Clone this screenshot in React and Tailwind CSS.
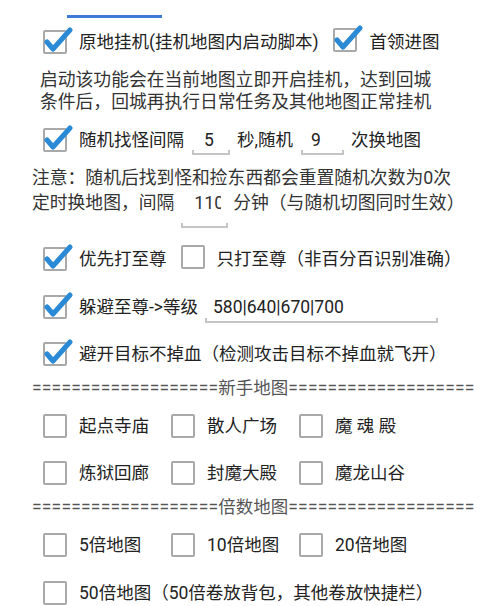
import React from 'react';

const Check = ({ checked }) => (
  <span className="relative inline-block w-[24px] h-[24px] shrink-0 border-2 border-[#a9a9a9] rounded-[2px] bg-white">
    {checked && (
      <svg className="absolute left-[-2px] top-[-6px] w-[30px] h-[28px]" viewBox="0 0 30 28">
        <path d="M4 16 L10 23 L27 4" fill="none" stroke="#2a8ad6" strokeWidth="5" strokeLinecap="round" strokeLinejoin="round" />
      </svg>
    )}
  </span>
);

// android style edit text: text + underline with small ticks
const Field = ({ value, width, pad = 12, drop = 15, clip }) => (
  <span className={`relative inline-flex items-center shrink-0 h-[24px] ${width}`}>
    <span className={`overflow-hidden whitespace-nowrap ${clip || ''}`} style={{ paddingLeft: pad }}>{value}</span>
    <span
      className="absolute left-0 right-0 h-[5px] border-b-2 border-x-2 border-[#c4c4c4]"
      style={{ top: 12 + drop - 5 }}
    />
  </span>
);

const Row = ({ className = '', children }) => (
  <div className={`flex items-center h-[36px] pl-[43px] whitespace-nowrap ${className}`}>{children}</div>
);

const Sep = ({ label, className = '' }) => (
  <div className={`flex items-center h-[20px] pl-[32px] text-[#555] whitespace-nowrap ${className}`}>
    <span className="tracking-[0.2px]">{'='.repeat(19)}</span>
    <span>{label}</span>
    <span className="tracking-[0.2px]">{'='.repeat(19)}</span>
  </div>
);

const Grid3 = ({ items, className = '' }) => (
  <div className={`grid grid-cols-[128px_128px_1fr] items-center h-[36px] pl-[43px] whitespace-nowrap ${className}`}>
    {items.map((t) => (
      <div key={t} className="flex items-center gap-[12px]">
        <Check />
        <span>{t}</span>
      </div>
    ))}
  </div>
);

export default function App() {
  return (
    <div
      className="w-[500px] h-[606px] overflow-hidden bg-white text-[#222] text-[17.5px] leading-[22px]"
      style={{ fontFamily: 'Roboto, "Noto Sans CJK SC", sans-serif' }}
    >
      <div className="ml-[67px] mt-[15px] w-[95px] h-[3px] bg-[#3d7ad8]" />

      <Row className="mt-[6px]">
        <Check checked />
        <span className="ml-[12px]">原地挂机(挂机地图内启动脚本)</span>
        <span className="ml-[14px]"><Check checked /></span>
        <span className="ml-[13px]">首领进图</span>
      </Row>

      <div className="mt-[9px] pl-[40px] text-[#333] text-[17.8px]">
        <div>启动该功能会在当前地图立即开启挂机，达到回城</div>
        <div>条件后，回城再执行日常任务及其他地图正常挂机</div>
      </div>

      <Row className="mt-[9px]">
        <Check checked />
        <span className="ml-[12px]">随机找怪间隔</span>
        <span className="ml-[8px]"><Field value="5" width="w-[38px]" pad={12} drop={15} /></span>
        <span className="ml-[7px]">秒,随机</span>
        <span className="ml-[8px]"><Field value="9" width="w-[43px]" pad={10} drop={15} /></span>
        <span className="ml-[7px]">次换地图</span>
      </Row>

      <div className="mt-[9px] h-[22px] pl-[32px] text-[#333] text-[17.8px] whitespace-nowrap">注意：随机后找到怪和捡东西都会重置随机次数为0次</div>

      <div className="flex items-center h-[28px] pl-[32px] text-[#333] text-[17.8px] whitespace-nowrap">
        <span>定时换地图，间隔</span>
        <span className="ml-[7px]"><Field value="110" width="w-[47px]" pad={13} drop={25} clip="w-[40px]" /></span>
        <span className="ml-[5px]">分钟（与随机切图同时生效）</span>
      </div>

      <Row className="mt-[24px]">
        <Check checked />
        <span className="ml-[12px]">优先打至尊</span>
        <span className="ml-[14px]"><Check /></span>
        <span className="ml-[12px]">只打至尊（非百分百识别准确）</span>
      </Row>

      <Row className="mt-[12px]">
        <Check checked />
        <span className="ml-[12px]">躲避至尊-&gt;等级</span>
        <span className="ml-[7px]"><Field value="580|640|670|700" width="w-[233px]" pad={8} drop={16} /></span>
      </Row>

      <Row className="mt-[11px]">
        <Check checked />
        <span className="ml-[12px]">避开目标不掉血（检测攻击目标不掉血就飞开）</span>
      </Row>

      <Sep label="新手地图" className="mt-[6px]" />
      <Grid3 items={['起点寺庙', '散人广场', '魔 魂 殿']} className="mt-[10px]" />
      <Grid3 items={['炼狱回廊', '封魔大殿', '魔龙山谷']} className="mt-[11px]" />

      <Sep label="倍数地图" className="mt-[6px]" />
      <Grid3 items={['5倍地图', '10倍地图', '20倍地图']} className="mt-[10px]" />

      <Row className="mt-[12px]">
        <Check />
        <span className="ml-[12px]">50倍地图（50倍卷放背包，其他卷放快捷栏）</span>
      </Row>
    </div>
  );
}
